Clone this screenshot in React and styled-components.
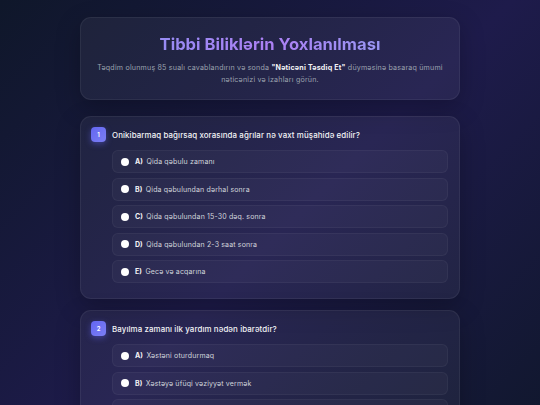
import React from 'react'
import styled, { createGlobalStyle } from 'styled-components'

const GlobalStyle = createGlobalStyle`
  html, body {
    margin: 0;
    padding: 0;
  }
  body {
    min-height: 100vh;
    background: linear-gradient(135deg, #0f172a 0%, #1e1b4b 50%, #0f172a 100%);
    font-family: 'Inter', 'Liberation Sans', sans-serif;
    color: #e5e7eb;
  }
`

const Page = styled.div`
  width: 380px;
  margin: 0 auto;
  padding: 17px 0 20px;
  display: flex;
  flex-direction: column;
  gap: 11px;
`

const Card = styled.div`
  background: rgba(255, 255, 255, 0.05);
  border: 1px solid rgba(255, 255, 255, 0.06);
  border-radius: 11px;
  box-shadow: 0 8px 24px rgba(0, 0, 0, 0.25);
  box-sizing: border-box;
`

const Header = styled(Card)`
  padding: 17px 14px 14px;
  text-align: center;
  margin-bottom: 5px;
`

const Title = styled.h1`
  margin: 0 0 8px;
  font-size: 16.6px;
  line-height: 19px;
  font-weight: 700;
  background: linear-gradient(90deg, #8b93f5 0%, #ac80f4 50%, #8ea3f3 100%);
  -webkit-background-clip: text;
  background-clip: text;
  color: transparent;
`

const Intro = styled.p`
  margin: 0;
  font-size: 7.1px;
  letter-spacing: 0.2px;
  line-height: 11.5px;
  color: #9ca3af;

  strong {
    color: #f3f4f6;
    font-weight: 700;
  }
`

const QuestionCard = styled(Card)`
  padding: 10px 11px 15px 10px;
`

const QuestionHead = styled.div`
  display: flex;
  align-items: center;
  gap: 6px;
  margin-bottom: 8px;
`

const Badge = styled.span`
  flex: none;
  width: 15px;
  height: 15px;
  border-radius: 4px;
  background: linear-gradient(135deg, #6366f1, #7c7ff5);
  box-shadow: 0 2px 6px rgba(99, 102, 241, 0.45);
  color: #fff;
  font-size: 6px;
  font-weight: 600;
  display: flex;
  align-items: center;
  justify-content: center;
`

const QuestionText = styled.div`
  font-size: 7.9px;
  letter-spacing: 0.1px;
  font-weight: 500;
  color: #f3f4f6;
`

const Options = styled.div`
  margin-left: 21px;
  display: flex;
  flex-direction: column;
  gap: 4.5px;
`

const Option = styled.label`
  height: 23px;
  box-sizing: border-box;
  display: flex;
  align-items: center;
  padding-left: 8px;
  background: rgba(255, 255, 255, 0.03);
  border: 1px solid rgba(255, 255, 255, 0.045);
  border-radius: 6px;
  cursor: pointer;
`

const Radio = styled.span`
  width: 8px;
  height: 8px;
  border-radius: 50%;
  background: #ffffff;
  margin-right: 6px;
  flex: none;
`

const Letter = styled.span`
  font-size: 7px;
  font-weight: 700;
  color: #f3f4f6;
  margin-right: 3.5px;
`

const OptionText = styled.span`
  font-size: 7px;
  letter-spacing: 0.15px;
  color: #d1d5db;
`

const questions = [
  {
    text: 'Onikibarmaq bağırsaq xorasında ağrılar nə vaxt müşahidə edilir?',
    options: [
      'Qida qəbulu zamanı',
      'Qida qəbulundan dərhal sonra',
      'Qida qəbulundan 15-30 dəq. sonra',
      'Qida qəbulundan 2-3 saat sonra',
      'Gecə və acqarına',
    ],
  },
  {
    text: 'Bayılma zamanı ilk yardım nədən ibarətdir?',
    options: [
      'Xəstəni oturdurmaq',
      'Xəstəyə üfüqi vəziyyət vermək',
      'Xəstəni ayağa qaldırmaq',
      'Xəstəyə su içirtmək',
    ],
  },
]

const letters = ['A', 'B', 'C', 'D', 'E']

function App() {
  return (
    <>
      <GlobalStyle />
      <Page>
        <Header>
          <Title>Tibbi Biliklərin Yoxlanılması</Title>
          <Intro>
            Təqdim olunmuş 85 sualı cavablandırın və sonda{' '}
            <strong>"Nəticəni Təsdiq Et"</strong> düyməsinə basaraq ümumi
            nəticənizi və izahları görün.
          </Intro>
        </Header>
        {questions.map((q, i) => (
          <QuestionCard key={i}>
            <QuestionHead>
              <Badge>{i + 1}</Badge>
              <QuestionText>{q.text}</QuestionText>
            </QuestionHead>
            <Options>
              {q.options.map((opt, j) => (
                <Option key={j}>
                  <Radio />
                  <Letter>{letters[j]})</Letter>
                  <OptionText>{opt}</OptionText>
                </Option>
              ))}
            </Options>
          </QuestionCard>
        ))}
      </Page>
    </>
  )
}

export default App
